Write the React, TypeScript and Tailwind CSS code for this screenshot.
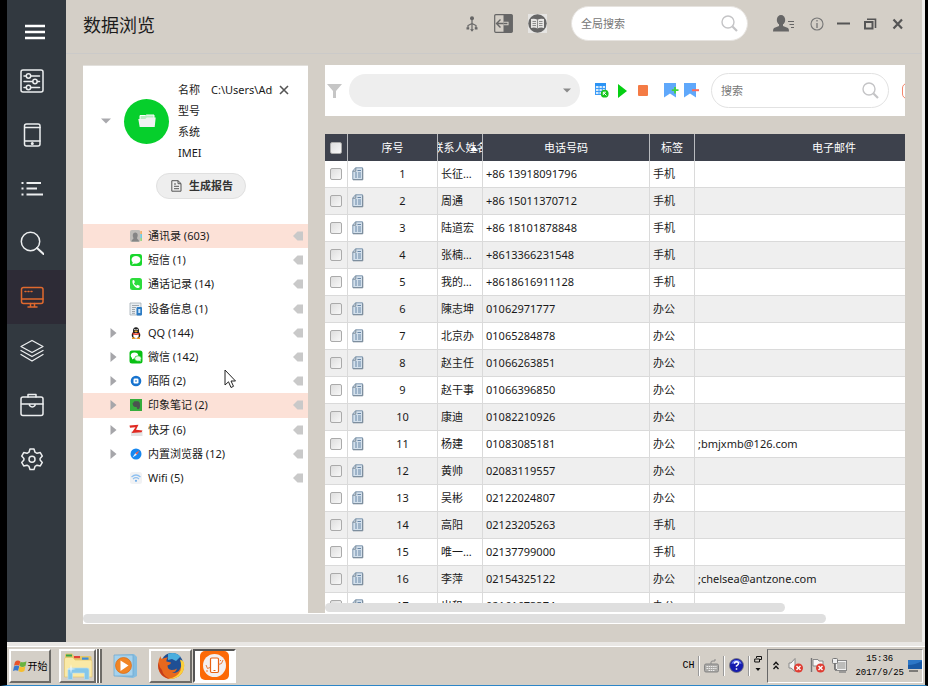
import React from "react";

type Contact = [string, string, string, string];

const contacts: Contact[] = [
  ["长征大夫", "+86 13918091796", "手机", ""],
  ["周通", "+86 15011370712", "手机", ""],
  ["陆道宏", "+86 18101878848", "手机", ""],
  ["张楠同学", "+8613366231548", "手机", ""],
  ["我的号码", "+8618616911128", "手机", ""],
  ["陳志坤", "01062971777", "办公", ""],
  ["北京办", "01065284878", "办公", ""],
  ["赵主任", "01066263851", "办公", ""],
  ["赵干事", "01066396850", "办公", ""],
  ["康迪", "01082210926", "办公", ""],
  ["杨建", "01083085181", "办公", ";bmjxmb@126.com"],
  ["黄帅", "02083119557", "办公", ""],
  ["吴彬", "02122024807", "办公", ""],
  ["高阳", "02123205263", "手机", ""],
  ["唯一视觉", "02137799000", "手机", ""],
  ["李萍", "02154325122", "办公", ";chelsea@antzone.com"],
  ["出租", "02161673374", "办公", ""],
];

const line = { fill: "none", stroke: "currentColor", strokeWidth: 1.5, strokeLinecap: "round", strokeLinejoin: "round" } as const;

const navItems: { label: string; active?: boolean; icon: React.ReactNode }[] = [
  {
    label: "设置项",
    icon: (
      <g {...line}>
        <rect x="1" y="1" width="22" height="22" rx="2" />
        <path d="M4 7h2M11 7h8.500M4 12.500h8.500M17.500 12.500h2M4 18.500h2M11 18.500h8.500" />
        <circle cx="8.500" cy="7" r="2.200" />
        <circle cx="15" cy="12.500" r="2.200" />
        <circle cx="8.500" cy="18.500" r="2.200" />
      </g>
    ),
  },
  {
    label: "手机",
    icon: (
      <g {...line}>
        <rect x="4.500" y="1" width="15.500" height="22" rx="2" />
        <path d="M5 4.500h15M5 18h15" />
        <circle cx="12.300" cy="20.500" r="0.800" fill="currentColor" />
      </g>
    ),
  },
  {
    label: "列表",
    icon: (
      <path d="M1.500 6h2M6.500 6H21M1.500 11.500h2M6.500 11.500H17M1.500 17.500h2M6.500 17.500H23" fill="none" stroke="currentColor" strokeWidth="2" />
    ),
  },
  {
    label: "搜索",
    icon: (
      <g {...line}>
        <circle cx="10.500" cy="10.500" r="9.200" />
        <path d="M17 17l6.500 6" strokeWidth="2" />
      </g>
    ),
  },
  {
    label: "数据浏览",
    active: true,
    icon: (
      <g {...line}>
        <rect x="1.500" y="2.500" width="21.500" height="16" rx="2" />
        <path d="M2 14h21M10.500 18.500V22M14.500 18.500V22M8 22h9" />
        <path d="M5 6.500h1M8 6.500h1M11 6.500h1" />
      </g>
    ),
  },
  {
    label: "图层",
    icon: (
      <g {...line} strokeWidth="1.300">
        <path d="M12 1.500L23 7.500 12 13.500 1 7.500z" />
        <path d="M1 11.500l11 6 11-6M1 15.500l11 6.500 11-6.500" />
      </g>
    ),
  },
  {
    label: "工具箱",
    icon: (
      <g {...line}>
        <rect x="1" y="4" width="22" height="18.500" rx="2" />
        <path d="M8 4V1.500h8V4M1.500 11h8M15 11h8M9.500 11h5.500v1.500q-2.700 3-5.500 0z" />
      </g>
    ),
  },
  {
    label: "设置",
    icon: (
      <g {...line}>
        <path d="M10 2h4l1 3.200 2 1.100 3.300-.7 2 3.500-2.200 2.400v1.500l2.200 2.400-2 3.500-3.300-.7-2 1.200L14 22.500h-4l-1-3.100-2-1.200-3.300.7-2-3.500 2.200-2.400v-1.500L1.700 9.100l2-3.500 3.300.7 2-1.100z" />
        <circle cx="12" cy="12.200" r="3" />
      </g>
    ),
  },
];

const treeItems: { name: string; count: number; expandable?: boolean; selected?: boolean; icon: React.ReactNode }[] = [
  {
    name: "通讯录", count: 603, selected: true,
    icon: (
      <>
        <rect width="10.500" height="12" x="1" y="1" rx="2" fill="#bfbcb8" />
        <path d="M2.500 12.500c0-2 2-2 2-3.500C3 6.500 4 3.500 6.300 3.500S9.500 6.500 8 9c0 1.500 2 1.500 2 3.500z" fill="#858585" />
        <path d="M11.500 2h1.300v3h-1.300z" fill="#f3a44d" /><path d="M11.500 5h1.300v4h-1.300z" fill="#49c8ea" /><path d="M11.500 9h1.300v3h-1.300z" fill="#7ed36d" />
      </>
    ),
  },
  {
    name: "短信", count: 1,
    icon: (<><rect x="1" y="1" width="12" height="12" rx="2.500" fill="#19d72d" /><ellipse cx="7" cy="6.800" rx="4.500" ry="3.900" fill="#fff" /><path d="M4 9l-1 2.500L6.500 10z" fill="#fff" /></>),
  },
  {
    name: "通话记录", count: 14,
    icon: (<><rect x="1" y="1" width="12" height="12" rx="2.500" fill="#2ddc3c" /><path d="M3.800 3l1.400.2.700 2-1 1c.6 1.200 1.300 2 2.500 2.600l1-1 2.200.9v1.600c-1 1.300-3 .6-4.800-.9S2.700 5 3.800 3z" fill="#fff" /></>),
  },
  {
    name: "设备信息", count: 1,
    icon: (<><path d="M1 1h11v12H1z" fill="#e9eef2" stroke="#9aa4ac" strokeWidth="0.700" /><path d="M3 3.500h7M3 5.500h4M3 7.500h3M3 9.500h3M3 11.300h3" stroke="#8a949c" strokeWidth="0.800" /><rect x="7.500" y="5" width="5.500" height="8.500" rx="1" fill="#2d7cc4" /><path d="M9.300 7h2v4h-2z" fill="#cfe8fb" /></>),
  },
  {
    name: "QQ", count: 144, expandable: true,
    icon: (<><ellipse cx="7" cy="5" rx="3" ry="3.700" fill="#161616" /><ellipse cx="7" cy="9" rx="4.300" ry="3.500" fill="#1b1b1b" /><ellipse cx="7" cy="9.600" rx="2.700" ry="2.800" fill="#fff" /><path d="M3.500 6.500q3.500 2 7 0v1.800q-3.500 1.600-7 0z" fill="#e03a26" /><ellipse cx="7" cy="5.300" rx="1.800" ry="0.800" fill="#f8b62b" /><path d="M3 11.500h3.200V13H3zM8 11.500h3V13H8z" fill="#f39a1e" /><circle cx="5.900" cy="3.500" r="0.700" fill="#fff" /><circle cx="8.100" cy="3.500" r="0.700" fill="#fff" /></>),
  },
  {
    name: "微信", count: 142, expandable: true,
    icon: (<><rect x="0.500" y="0.500" width="13" height="13" rx="2.500" fill="#08c013" /><ellipse cx="5.500" cy="5.500" rx="3.700" ry="3" fill="#fff" /><path d="M3 7.500v2L5.500 8z" fill="#fff" /><ellipse cx="9" cy="8.500" rx="3.300" ry="2.700" fill="#e9ffe9" stroke="#08c013" strokeWidth="0.600" /><path d="M10 10.500l1.500 1.300V10z" fill="#fff" /></>),
  },
  {
    name: "陌陌", count: 2, expandable: true,
    icon: (<><circle cx="7" cy="7" r="5.300" fill="#1673cf" /><rect x="4.500" y="4.500" width="5" height="5" rx="1.200" fill="#fff" /><path d="M6 6.500h2v1H6z" fill="#1673cf" /></>),
  },
  {
    name: "印象笔记", count: 2, expandable: true, selected: true,
    icon: (<><path d="M1 1h12v12H1z" fill="#35ad3c" /><path d="M3.500 5.500L5.500 3.200h3.700Q11 3.500 11 7.500 11 11 9 11.200 7.500 11 7.700 9H6Q3.800 8.500 3.500 5.500z" fill="#4b5350" /></>),
  },
  {
    name: "快牙", count: 6, expandable: true,
    icon: (<><path d="M2 8.500h11.500V13H2z" fill="#e3e3e3" /><path d="M.5 2.500L9.500 1.800 7 6.800l6.500.7-1 1.800-10 .7 4-5.700-5.500.5z" fill="#e02a22" /></>),
  },
  {
    name: "内置浏览器", count: 12, expandable: true,
    icon: (<><circle cx="7" cy="7" r="5.500" fill="#1687f0" /><path d="M10.500 3.500L7.800 7.800 6.200 6.200z" fill="#ff5c45" /><path d="M3.500 10.500l2.700-4.300 1.600 1.600z" fill="#e9f3ff" /></>),
  },
  {
    name: "Wifi", count: 5,
    icon: (<><rect x="1" y="1" width="12" height="12" rx="2.500" fill="#f1f2f4" /><path d="M2.500 6q4.500-4 9 0M4 8q3-2.600 6 0" stroke="#8fc0f0" strokeWidth="1.200" fill="none" /><circle cx="7" cy="9.800" r="1.100" fill="#70aeea" /></>),
  },
];

function SearchGlyph() {
  return (
    <svg width="17" height="17" viewBox="0 0 17 17" fill="none" stroke="#c4c4c6">
      <circle cx="7" cy="7" r="6" strokeWidth="1.400" />
      <path d="M11.500 11.500L16 16" strokeWidth="2.200" />
    </svg>
  );
}

function DocIcon() {
  return (
    <svg width="12" height="14" viewBox="0 0 12 14" className="block">
      <path d="M3.500 .8H10.500v11.700H.8V4z" fill="#d3e0ec" stroke="#7f98b0" />
      <path d="M.8 4.200h3V.8M10.800 1.500v11.300H1" fill="none" stroke="#7d8b98" />
      <path d="M5.500 3.500H9M3 6h2M6 6h3M3 8h2M6 8h3M3 10h2M6 10h3" stroke="#6987a6" />
    </svg>
  );
}

function Sidebar() {
  return (
    <nav className="flex w-[59px] shrink-0 flex-col bg-[#323940] text-[#eceeef]">
      <button aria-label="菜单" className="flex h-[54px] items-center justify-center pt-[10px] pr-1">
        <svg width="20" height="16" viewBox="0 0 20 16" fill="none" stroke="#fff" strokeWidth="2.500">
          <path d="M0 2h20M0 8h20M0 14h20" />
        </svg>
      </button>
      {navItems.map((item) => (
        <button
          key={item.label}
          aria-label={item.label}
          className={`flex h-[54px] items-center pl-[13px] ${item.active ? "bg-[#2d2b36] text-[#e0692e]" : ""}`}
        >
          <svg width="24" height="24" viewBox="0 0 24 24">{item.icon}</svg>
        </button>
      ))}
    </nav>
  );
}

function Header() {
  return (
    <header className="flex h-[54px] shrink-0 items-center border-b border-[#cbcac9] pr-[18px] pb-[6px] pl-[17px] text-[#666]">
      <h1 className="mt-[2px] flex-1 text-[18px] leading-6 text-[#1c1c1c]">数据浏览</h1>
      <button aria-label="USB" className="mr-4">
        <svg width="12" height="16" viewBox="0 0 12 16" fill="none" stroke="#666" strokeWidth="1.200">
          <circle cx="6" cy="2.200" r="2" fill="#666" stroke="none" />
          <path d="M6 3v11M6 7.500L2 9.500v2M6 7.500l4 2V12" />
          <path d="M4 13.300h4L6 15.800zM.5 11.200h2.700v2.300H.5zM8.800 11.200h2.700v2.300H8.800z" fill="#666" stroke="none" />
        </svg>
      </button>
      <button aria-label="导入" className="mr-[15px]">
        <svg width="19" height="19" viewBox="0 0 19 19">
          <rect x="0.700" y="0.700" width="17.600" height="17.600" rx="1" fill="none" stroke="#666" strokeWidth="1.200" />
          <path d="M9.500 1h9v17h-9z" fill="#666" />
          <path d="M9.500 8.300H14v2.400H9.500" fill="none" stroke="#d4cfc7" strokeWidth="1.100" />
          <path d="M9.500 9.500H3.500M6.500 5.500l-4 4 4 4" fill="none" stroke="#666" strokeWidth="1.400" />
        </svg>
      </button>
      <button aria-label="手册" className="mr-[24px]">
        <svg width="19" height="19" viewBox="0 0 19 19">
          <path d="M0 0h19v19H0z" fill="#e6e5e3" />
          <circle cx="9.500" cy="9.500" r="9.200" fill="#666" />
          <path d="M3 5q3.500-1 6.500.7Q12.500 4 16 5v9q-3.500-1-6.500.5Q6.500 13 3 14z" fill="#e6e5e3" />
          <path d="M9.500 5.500v9M4.500 7.500h3.500M4.500 9.500h3.500M4.500 11.500h3.500M11 7.500h3.500M11 9.500h3.500M11 11.500h3.500" stroke="#777" strokeWidth="0.800" />
        </svg>
      </button>
      <label className="mr-[25px] flex h-[35px] w-[177px] items-center rounded-full border border-[#e6e3df] bg-white px-[9px]">
        <input aria-label="全局搜索" placeholder="全局搜索" className="min-w-0 flex-1 bg-transparent outline-none placeholder:text-[#777]" />
        <SearchGlyph />
      </label>
      <button aria-label="用户" className="mr-[15px]">
        <svg width="22" height="18" viewBox="0 0 22 18">
          <ellipse cx="8" cy="5" rx="4.200" ry="5" fill="#666" />
          <path d="M6 8h4v3l5 2q1 .5 1 3.500H0Q0 13.500 1 13l5-2z" fill="#666" />
          <path d="M15 6.500h6M16.500 9.500H21M18 12.500h3" stroke="#666" strokeWidth="1.200" />
        </svg>
      </button>
      <button aria-label="关于" className="mr-[13px]">
        <svg width="14" height="14" viewBox="0 0 14 14" fill="none" stroke="#777">
          <circle cx="7" cy="7" r="6" strokeWidth="1.100" />
          <path d="M7 3v1.500M7 6v5" strokeWidth="1.300" />
        </svg>
      </button>
      <button aria-label="最小化" className="mr-[14px]">
        <svg width="13" height="12" viewBox="0 0 13 12"><path d="M0 5.500h13" stroke="#555" strokeWidth="2" /></svg>
      </button>
      <button aria-label="还原" className="mr-[15px]">
        <svg width="13" height="12" viewBox="0 0 13 12" fill="none" stroke="#555">
          <path d="M3 1.200h8.500V10" strokeWidth="1.600" />
          <rect x="1" y="4" width="7.500" height="6.500" strokeWidth="2" />
        </svg>
      </button>
      <button aria-label="关闭">
        <svg width="12" height="12" viewBox="0 0 12 12"><path d="M1.500 1.500l8.500 9M10 1.500l-8.500 9" stroke="#555" strokeWidth="2.200" /></svg>
      </button>
    </header>
  );
}

function DevicePanel() {
  return (
    <aside className="w-[225px] shrink-0 overflow-hidden border-t border-[#e2e0dc] bg-white">
      <section className="flex items-center pt-[13px] pl-[18px]">
        <button aria-label="收起" className="mr-[13px]">
          <svg width="10" height="6" viewBox="0 0 10 6"><path d="M0 .5h10L5 5.500z" fill="#a9a9ad" /></svg>
        </button>
        <div className="flex size-[45px] shrink-0 items-center justify-center rounded-full bg-[#06cf2c]">
          <svg width="18" height="14" viewBox="0 0 18 14">
            <path d="M2 6V1.500h5.500l1-.5H16V6z" fill="#b9ecc2" stroke="#fff" />
            <path d="M.3 5h7l1.500-1.500h8.900l-1 9.500h-15z" fill="#f2f2f2" />
          </svg>
        </div>
        <dl className="ml-[9px] grid flex-1 grid-cols-[33px_1fr] leading-[21px]">
          <dt>名称</dt>
          <dd className="flex items-center">
            <span className="w-[62px] overflow-hidden whitespace-nowrap">C:\Users\Administrator</span>
            <button aria-label="移除设备" className="ml-[6px]">
              <svg width="10" height="10" viewBox="0 0 10 10"><path d="M1 1l8 8M9 1L1 9" stroke="#555" strokeWidth="1.600" /></svg>
            </button>
          </dd>
          <dt className="col-span-2">型号</dt>
          <dt className="col-span-2">系统</dt>
          <dt className="col-span-2">IMEI</dt>
        </dl>
      </section>
      <button className="mt-[10px] ml-[73px] flex h-[26px] w-[90px] items-center rounded-full border border-[#e0e0e0] bg-[#eee] pl-[14px] font-bold text-[#333]">
        <svg width="11" height="12" viewBox="0 0 11 12" fill="none" stroke="#555" className="mr-[7px]">
          <path d="M.8.700H7L10 3.500v7.700H.8zM7 .7v3h3M3 4h2M3 6.300h5M3 8.700h5" />
        </svg>
        生成报告
      </button>
      <ul className="mt-[25px] flex h-[266px] flex-col">
        {treeItems.map((item) => (
          <li key={item.name} className={`flex flex-1 items-center pr-[5px] pl-[27px] ${item.selected ? "bg-[#fce1d7]" : ""}`}>
            <svg width="7" height="10" viewBox="0 0 7 10" className="mr-[12px]">
              {item.expandable && <path d="M.5 0l6 5-6 5z" fill="#a6a6aa" />}
            </svg>
            <svg width="14" height="14" viewBox="0 0 14 14" className="mr-[5px]">{item.icon}</svg>
            <span className="flex-1 leading-4">{item.name} ({item.count})</span>
            <svg width="10" height="10" viewBox="0 0 10 10"><path d="M0 5l4.500-4.500H10v9H4.500z" fill="#c9c9c9" /></svg>
          </li>
        ))}
      </ul>
    </aside>
  );
}

function Bookmark({ children }: { children: React.ReactNode }) {
  return (
    <svg width="15" height="15" viewBox="0 0 15 15">
      <path d="M0 0h12v14.500L6 10.500 0 14.500z" fill="#5fa8fb" />
      {children}
    </svg>
  );
}

function Toolbar() {
  return (
    <div className="flex h-[51px] shrink-0 items-center overflow-hidden bg-white pl-[2px] *:shrink-0">
      <svg width="15" height="14" viewBox="0 0 15 14" className="mr-[7px]"><path d="M0 0h15L9 7v7H6V7z" fill="#c6c6c6" /></svg>
      <div className="mr-[15px] grid w-[231px] items-center">
        <select aria-label="筛选条件" className="col-start-1 row-start-1 h-[33px] w-full appearance-none rounded-full bg-[#eee] px-3">
          <option></option>
        </select>
        <svg width="8" height="5" viewBox="0 0 8 5" className="pointer-events-none col-start-1 row-start-1 mr-[9px] justify-self-end"><path d="M0 .5h8L4 4.500z" fill="#8a8a8a" /></svg>
      </div>
      <button aria-label="导出表格" className="mr-[9px]">
        <svg width="14" height="15" viewBox="0 0 14 15">
          <path d="M0 0h11v12H0z" fill="#d5ebfd" />
          <path d="M0 0h11v3H0z" fill="#2b93f5" />
          <path d="M0 5.500h11M0 8.500h11M0 11.500h11M.5 3v9M4 3v9M7.300 3v9M10.500 3v6" stroke="#3d9bf7" fill="none" />
          <circle cx="9.700" cy="10.700" r="3.900" fill="#16c51c" />
          <path d="M11.500 12.500L8.300 9.300M8.300 12V9.200H11" stroke="#fff" fill="none" />
        </svg>
      </button>
      <button aria-label="开始" className="mr-[10px]">
        <svg width="10" height="14" viewBox="0 0 10 14"><path d="M0 0l9 7-9 7z" fill="#05cf13" /></svg>
      </button>
      <button aria-label="停止" className="mr-[16px] h-[11px] w-[10px] rounded-[1px] bg-[#f47b45]" />
      <button aria-label="添加书签" className="mr-[5px]">
        <Bookmark><path d="M11 4v6.500M7.800 7.200h6.700" stroke="#3fd43c" strokeWidth="1.800" /></Bookmark>
      </button>
      <button aria-label="删除书签" className="mr-[12px]">
        <Bookmark><path d="M8 7.200h7" stroke="#ff6a58" strokeWidth="2" /></Bookmark>
      </button>
      <label className="mr-[13px] flex h-[35px] w-[178px] items-center rounded-full border border-[#e2e2e2] px-[9px]">
        <input aria-label="搜索" placeholder="搜索" className="min-w-0 flex-1 bg-transparent outline-none placeholder:text-[#777]" />
        <SearchGlyph />
      </label>
      <button aria-label="高级搜索" className="h-4 w-[50px] rounded-[5px] border border-[#f5866c]" />
    </div>
  );
}

function Box({ label }: { label: string }) {
  return (
    <input
      type="checkbox"
      aria-label={label}
      className="mx-auto block size-3 appearance-none rounded-[2px] border border-[#aaa] bg-linear-to-br from-[#dedede] to-[#f8f8f8] checked:bg-[#59a9fb]"
    />
  );
}

const th = "border-r border-[#b9bbbf] p-0 font-normal";
const td = "overflow-hidden border-r border-b border-[#dadada] px-[3px] py-0 text-ellipsis whitespace-nowrap";

function ContactTable() {
  return (
    <div className="min-h-0 flex-1 overflow-hidden">
      <table className="w-full min-w-[649px] table-fixed border-separate border-spacing-0">
        <colgroup>
          <col className="w-[23px]" />
          <col className="w-[90px]" />
          <col className="w-[45px]" />
          <col className="w-[167px]" />
          <col className="w-[45px]" />
          <col />
        </colgroup>
        <thead>
          <tr className="h-[27px] bg-[#3d414c] text-white">
            <th className={th}><Box label="全选" /></th>
            <th className={th}>序号</th>
            <th className={th}>
              <div className="relative flex justify-center overflow-hidden whitespace-nowrap">
                <span>联系人姓名</span>
                <svg width="8" height="5" viewBox="0 0 8 5" className="absolute top-[6px] right-[4px]"><path d="M0 5h8L4 0z" fill="#fff" /></svg>
              </div>
            </th>
            <th className={th}>电话号码</th>
            <th className={th}>标签</th>
            <th className={th}>电子邮件</th>
          </tr>
        </thead>
        <tbody>
          {contacts.map(([name, phone, tag, mail], i) => (
            <tr key={phone} className={`h-[27px] ${i % 2 ? "bg-[#efefef]" : "bg-white"}`}>
              <td className="border-r border-b border-[#dadada] p-0"><Box label={`选择 ${name}`} /></td>
              <td className={td}>
                <div className="grid grid-cols-[12px_1fr] items-center pl-px">
                  <DocIcon />
                  <span className="pl-[7px] text-center">{i + 1}</span>
                </div>
              </td>
              <td className={td}>{name}</td>
              <td className={td}>{phone}</td>
              <td className={td}>{tag}</td>
              <td className={td}>{mail}</td>
            </tr>
          ))}
        </tbody>
      </table>
    </div>
  );
}

const raised = "flex h-[34px] items-center justify-center border-2 border-t-white border-r-[#6d6b67] border-b-[#6d6b67] border-l-white";

function Taskbar() {
  return (
    <footer className="flex h-[38px] shrink-0 items-center bg-[#d4cfc7] pr-[2px] pb-px pl-[2px] text-black">
      <button className={`${raised} mr-2 w-[42px] gap-px text-[10px]`}>
        <svg width="14" height="14" viewBox="0 0 14 14">
          <path d="M2 3q2.500-2.500 5.300-.5L6.300 6.800Q3.500 5.300 1 6.800z" fill="#e8532b" />
          <path d="M7.500 2.700q3 1.500 6-.5L12.500 7q-3 1.800-6 0z" fill="#69b33e" />
          <path d="M1 7.400q2.500-1.800 5.200-.2l-1 4.600Q2.500 10.500 0 12z" fill="#3878ce" />
          <path d="M6.400 7.500q3 1.500 6 0l-1 4.500q-3 1.800-6 0z" fill="#f5be2f" />
        </svg>
        开始
      </button>
      <button aria-label="资源管理器" className={`${raised} w-[37px]`}>
        <svg width="30" height="28" viewBox="0 0 30 28" className="shrink-0">
          <path d="M2 25V3q0-1.500 1.500-1.500H9L11 4h16q1.500 0 1.500 1.500V25z" fill="#e6c768" />
          <path d="M3 2.500h6v2H3z" fill="#36a64a" /><path d="M11 4h6v2.200h-6z" fill="#df4038" /><path d="M19 5.500h6.500v2.500H19z" fill="#3a8bda" />
          <path d="M1.500 25V7q0-1.500 1.500-1.500h7L12 8h15.500q1.500 0 1.500 1.500V25z" fill="#fae9a6" stroke="#e0c063" strokeWidth="0.600" />
          <path d="M5 27.500V18q0-2 2-2h17q2 0 2 2v9.500h-4.500V21h-12v6.500z" fill="#85c7ea" stroke="#b4def2" strokeWidth="0.700" />
          <path d="M8 12l.8 4.200L13 17l-4.200.8L8 22l-.8-4.200L3 17l4.200-.8z" fill="#fff" opacity="0.700" />
        </svg>
      </button>
      <span className="h-[34px] w-[3px] border-r-2 border-[#6d6b67] bg-white" />
      <span className="mr-[11px] h-[34px] w-[3px] border-r-2 border-[#6d6b67] bg-white" />
      <button aria-label="媒体播放器" className="mr-[9px]">
        <svg width="27" height="26" viewBox="0 0 27 26">
          <path d="M1 2l20-1 3 3v19l-4 2-19-2z" fill="#85bde0" />
          <path d="M1 2h19v21L1 23z" fill="#a5d2ed" stroke="#6fa7ce" strokeWidth="0.700" />
          <circle cx="10.500" cy="12.500" r="8" fill="#f18525" stroke="#d96912" strokeWidth="0.700" />
          <path d="M7.500 7.500l8 5-8 5.500z" fill="#fff" />
        </svg>
      </button>
      <button aria-label="Firefox" className={`${raised} mr-px w-[43px]`}>
        <svg width="28" height="28" viewBox="0 0 28 28">
          <circle cx="15" cy="12" r="11" fill="#1f4f94" />
          <path d="M11 2q7-3 12.500 2.500L19 9l-4-2-4 1z" fill="#4aaede" />
          <path d="M26.500 9q2.500 10-5 15.500Q14 29 7 25 1 21 1 13.500 1 8 3.500 4q0 2.500 1.500 3 3-2 6-1.500Q9 7.500 9.500 9.500l4.500 1q0 1.800-3.500 3 0 4 4 4.500 3.500 0 5.500-1.500-1 3.500-5 4.500 6 .5 8-4 2-3.500.5-9 2 1 3 4z" fill="#e8681d" />
          <path d="M27 10.500q1.500 9-5.500 14-5 3-10 2 9-1 12-8 1.500-5-.5-11 3 1 4 3z" fill="#fbd03c" />
          <path d="M1.500 10q-1.500 8 4 13.500Q9 26.500 13 27q-7-3-8-9-3-3-3.500-8z" fill="#c43d1a" />
        </svg>
      </button>
      <button aria-label="手机取证" className="flex h-[34px] w-[43px] items-center justify-center border-2 border-t-[#555] border-r-white border-b-white border-l-[#555] bg-white">
        <svg width="29" height="29" viewBox="0 0 29 29">
          <rect width="29" height="29" rx="5" fill="#fc6907" />
          <circle cx="14.500" cy="14.500" r="11.500" fill="#f3eff0" />
          <rect x="10.500" y="7" width="8" height="14.500" rx="1.200" fill="#fff" stroke="#e86112" strokeWidth="1.200" />
          <path d="M10 16.500l-2.500 1L6 14M18.500 13.500l3-1 1.500-3.500M20 9l1 1M7 19v2" stroke="#ea7a38" fill="none" />
          <path d="M13.500 19.500h2" stroke="#e86112" />
        </svg>
      </button>
      <div className="flex-1" />
      <span className="font-['Liberation_Mono',monospace] text-[10px]">CH</span>
      <span className="mx-[4px] h-[20px] border-r border-l border-l-[#999] border-r-white" />
      <svg width="15" height="14" viewBox="0 0 15 14">
        <path d="M7 5V3q0-1 2-1h2V0" fill="none" stroke="#888" />
        <rect x="0.500" y="5" width="14" height="8" rx="1.500" fill="#aaa9a6" stroke="#858585" />
        <path d="M2.500 7.500h10M2.500 9.500h10M4.500 11.500h6" stroke="#eee" strokeDasharray="1.500 0.700" />
      </svg>
      <span className="mx-[4px] h-[20px] border-r border-l border-l-[#999] border-r-white" />
      <svg width="15" height="15" viewBox="0 0 15 15">
        <circle cx="7.500" cy="7.500" r="7" fill="#151bae" stroke="#777" strokeWidth="0.800" />
        <path d="M2.500 6a5 4 0 0110 0q-5-2-10 0z" fill="#6b7df0" />
        <path d="M5.500 5.800q0-2 2-2t2 1.800q0 1.200-2 2.200v1M7.500 10.300v1.500" stroke="#fff" strokeWidth="1.500" fill="none" />
      </svg>
      <span className="mx-[4px] h-[20px] border-r border-l border-l-[#999] border-r-white" />
      <svg width="9" height="18" viewBox="0 0 9 18" className="mr-[4px] mb-[3px]">
        <path d="M2.500 3V1.500h5v3H6M.7 4h4.800v3H.7z" fill="none" stroke="#111" />
        <path d="M1.500 13h5L4 16z" fill="#111" />
      </svg>
      <div className="flex h-[34px] items-center border border-t-[#888] border-r-white border-b-white border-l-[#666] pl-[5px]">
        <svg width="6" height="9" viewBox="0 0 6 9" fill="none" stroke="#111" strokeWidth="1.300" className="mr-[9px]"><path d="M.5 4L3 1.300 5.500 4M.5 8L3 5.300 5.500 8" /></svg>
        <svg width="16" height="15" viewBox="0 0 16 15" className="mr-[6px]">
          <path d="M1 5h2l4-4.500v13L3 10H1z" fill="#f4f4f4" stroke="#888" />
          <circle cx="10.500" cy="10" r="4.500" fill="#df3c32" /><path d="M8.500 8l4 4M12.500 8l-4 4" stroke="#fff" strokeWidth="1.400" />
        </svg>
        <svg width="16" height="15" viewBox="0 0 16 15" className="mr-[6px]">
          <path d="M1.500 0v14" stroke="#777" strokeWidth="1.400" /><path d="M3 1.500h5l1 1.500h4v6H8L7 8H3z" fill="#f6f6f6" stroke="#888" />
          <circle cx="10.500" cy="10" r="4.500" fill="#df3c32" /><path d="M8.500 8l4 4M12.500 8l-4 4" stroke="#fff" strokeWidth="1.400" />
        </svg>
        <svg width="15" height="15" viewBox="0 0 15 15" className="mr-[8px]">
          <rect x="4.500" y="3.500" width="9.500" height="8" fill="#bcbcba" stroke="#f2f2f2" /><rect x="3.500" y="2.500" width="11" height="10" fill="none" stroke="#888" /><path d="M7 14h7" stroke="#888" strokeWidth="1.500" />
          <rect x="0.500" y="0.500" width="5" height="5" rx="1" fill="#eee" stroke="#777" /><path d="M2.500 6v5.500H5" stroke="#777" fill="none" />
        </svg>
        <div className="mr-[4px] text-center font-['Liberation_Mono',monospace] text-[9px] leading-[14px] whitespace-nowrap">
          <div>15:36</div>
          <div>2017/9/25</div>
        </div>
        <svg width="14" height="12" viewBox="0 0 14 12"><path d="M0 0h14v9H0z" fill="#2d77c7" /><path d="M0 5Q7 5 14 1v8H0z" fill="#1959a5" /><path d="M1 11h9" stroke="#444" strokeWidth="1.200" /></svg>
      </div>
    </footer>
  );
}

export default function App() {
  return (
    <div className="flex h-screen flex-col overflow-hidden border-r-[3px] border-b border-l-[7px] border-r-black border-b-[#2d86c8] border-l-black bg-[#d4cfc7] font-['Noto_Sans','Noto_Sans_CJK_SC',sans-serif] text-[11px] leading-4 text-[#1a1a1a]">
      <div className="flex min-h-0 flex-1 border-r-3 border-[#eeedeb]">
        <Sidebar />
        <main className="flex min-w-0 flex-1 flex-col">
          <Header />
          <div className="mx-[17px] mt-[11px] mb-[18px] flex min-h-0 flex-1 flex-col">
            <div className="flex min-h-0 flex-1 gap-[17px]">
              <DevicePanel />
              <div className="flex min-w-0 flex-1 flex-col">
                <Toolbar />
                <div className="mt-[18px] flex min-h-0 flex-1 flex-col bg-white">
                  <ContactTable />
                  <div className="h-[10px] shrink-0"><div className="h-[9px] w-[460px] max-w-full rounded-full bg-[#dfdfdf]" /></div>
                </div>
              </div>
            </div>
            <div className="h-[11px] shrink-0 bg-white pt-px"><div className="h-[9px] w-[743px] max-w-full rounded-full bg-[#dfdfdf]" /></div>
          </div>
        </main>
      </div>
      <div className="h-[5px] shrink-0 border-b border-white bg-[#e9e7e4]" />
      <Taskbar />
      <svg width="13" height="20" viewBox="0 0 13 20" className="pointer-events-none absolute top-[369px] left-[224px]">
        <path d="M1 1v15l3.500-3.200L7 18.500l2.500-1.200L7 12h4.500z" fill="#fff" stroke="#222" />
      </svg>
    </div>
  );
}
